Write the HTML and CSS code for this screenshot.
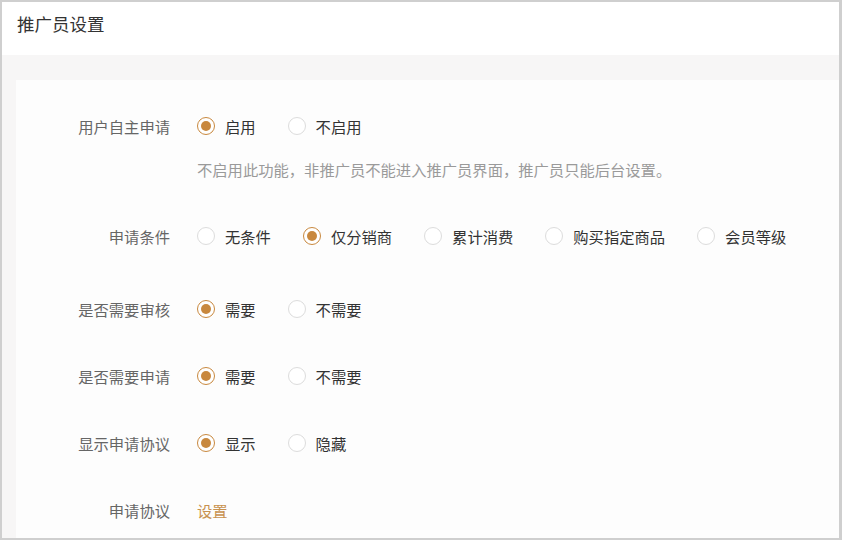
FILE: index.html
```html
<!DOCTYPE html>
<html lang="zh">
<head>
    <meta charset="UTF-8">
    <title>推广员设置</title>
    <link rel="stylesheet" href="styles.css">
</head>
<body>
  <div class="frame">
    <div class="page-header">推广员设置</div>

    <div class="page-body">
      <div class="card">

        <!-- 用户自主申请 -->
        <div class="form-row">
          <div class="form-label">用户自主申请</div>
          <div class="form-control">
            <label class="radio checked"><span class="radio-dot"></span>启用</label>
            <label class="radio"><span class="radio-dot"></span>不启用</label>
          </div>
        </div>
        <p class="form-tip">不启用此功能，非推广员不能进入推广员界面，推广员只能后台设置。</p>

        <div class="form-row row-cond">
          <div class="form-label">申请条件</div>
          <div class="form-control">
            <label class="radio"><span class="radio-dot"></span>无条件</label>
            <label class="radio checked"><span class="radio-dot"></span>仅分销商</label>
            <label class="radio"><span class="radio-dot"></span>累计消费</label>
            <label class="radio"><span class="radio-dot"></span>购买指定商品</label>
            <label class="radio"><span class="radio-dot"></span>会员等级</label>
          </div>
        </div>

        <div class="form-row">
          <div class="form-label">是否需要审核</div>
          <div class="form-control">
            <label class="radio checked"><span class="radio-dot"></span>需要</label>
            <label class="radio"><span class="radio-dot"></span>不需要</label>
          </div>
        </div>

        <div class="form-row">
          <div class="form-label">是否需要申请</div>
          <div class="form-control">
            <label class="radio checked"><span class="radio-dot"></span>需要</label>
            <label class="radio"><span class="radio-dot"></span>不需要</label>
          </div>
        </div>

        <div class="form-row">
          <div class="form-label">显示申请协议</div>
          <div class="form-control">
            <label class="radio checked"><span class="radio-dot"></span>显示</label>
            <label class="radio"><span class="radio-dot"></span>隐藏</label>
          </div>
        </div>

        <div class="form-row">
          <div class="form-label">申请协议</div>
          <div class="form-control">
            <a class="link" href="#">设置</a>
          </div>
        </div>

      </div>
    </div>
  </div>
</body>
</html>
```

FILE: styles.css
```css
/* 全局 */
body {
    margin: 0;
    padding: 0;
    font-family: "Noto Sans CJK SC", "Noto Sans", sans-serif;
    background: #fff;
}

.frame {
    width: 842px;
    height: 540px;
    box-sizing: border-box;
    border: 2px solid #cfcfcf;
    border-right-width: 3px;
    display: flex;
    flex-direction: column;
    overflow: hidden;
}

/* 标题栏 */
.page-header {
    flex-shrink: 0;
    height: 53px;
    box-sizing: border-box;
    padding: 9px 0 0 15px;
    font-size: 17.5px;
    line-height: 26px;
    color: #333;
    background: #fff;
}

.page-body {
    flex: 1;
    background: #f7f6f6;
    padding: 25px 0 0 14px;
    display: flex;
}

.card {
    flex: 1;
    background: #fdfdfd;
    padding-top: 26px;
}

/* 表单行 */
.form-row {
    display: flex;
    align-items: center;
    height: 40px;
    margin-bottom: 27px;
}

.row-cond {
    margin-bottom: 33px;
}

.form-label {
    width: 181px;
    text-align: right;
    font-size: 15.3px;
    color: #666;
    padding-right: 27px;
    box-sizing: border-box;
    flex-shrink: 0;
}

.form-control {
    display: flex;
    align-items: center;
}

.form-tip {
    margin: -15px 0 36px 181px;
    font-size: 15.3px;
    line-height: 22px;
    color: #9a9a9a;
}

/* 单选框 */
.radio {
    display: flex;
    align-items: center;
    font-size: 15.3px;
    color: #333;
    margin-right: 32px;
    cursor: pointer;
}

.radio-dot {
    width: 18px;
    height: 18px;
    box-sizing: border-box;
    border: 1px solid #dcdcdc;
    border-radius: 50%;
    background: #fff;
    margin-right: 10px;
    position: relative;
}

.radio.checked .radio-dot {
    border-color: #c8883e;
}

.radio.checked .radio-dot::after {
    content: "";
    position: absolute;
    left: 3px;
    top: 3px;
    width: 10px;
    height: 10px;
    border-radius: 50%;
    background: #c8883e;
}

.link {
    font-size: 15.3px;
    color: #c8924f;
    text-decoration: none;
}
```
